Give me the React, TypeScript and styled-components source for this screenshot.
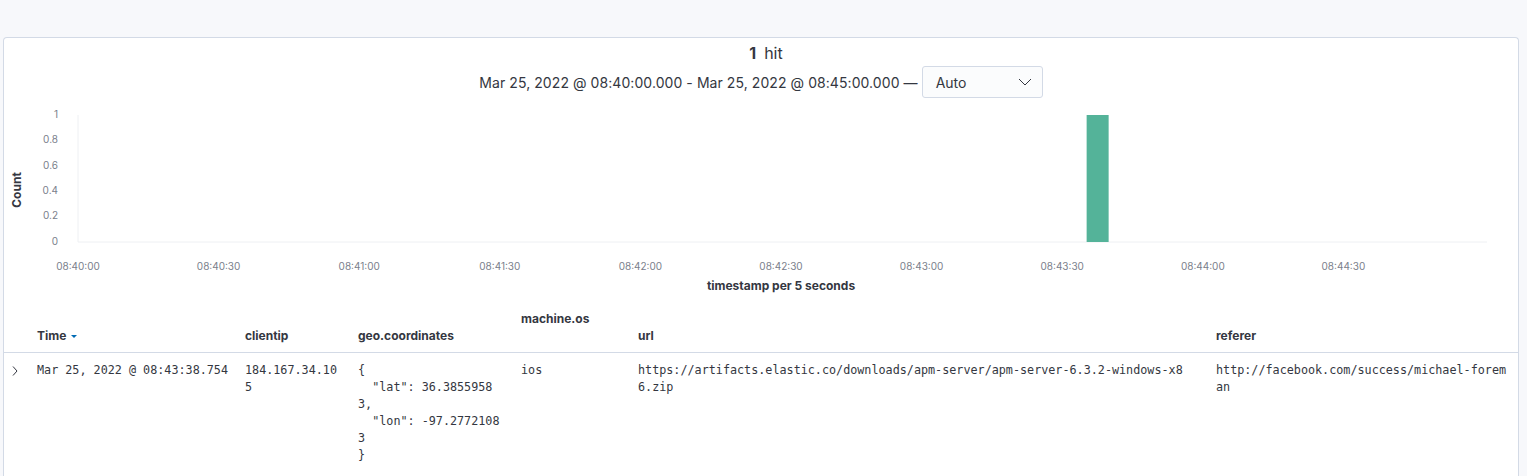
import React from 'react';
import styled, { createGlobalStyle } from 'styled-components';

const GlobalStyle = createGlobalStyle`
  body {
    margin: 0;
    background: #f7f8fb;
    font-family: Inter, "Noto Sans", "Liberation Sans", sans-serif;
    color: #343741;
  }
`;

const Page = styled.div`
  padding: 37px 8px 0 3px;
`;

const Panel = styled.div`
  background: #fff;
  border: 1px solid #d3dae6;
  border-bottom: none;
  border-radius: 4px 4px 0 0;
  min-height: 440px;
`;

const Hits = styled.div`
  text-align: center;
  padding: 3px 0 0 10px;
  font-size: 16px;
  line-height: 24px;

  strong {
    font-weight: 700;
    margin-right: 8px;
  }
`;

const RangeRow = styled.div`
  margin-top: 1px;
  display: flex;
  justify-content: center;
  align-items: center;
  gap: 4px;
  font-size: 14px;
  letter-spacing: 0.07px;
`;

const Select = styled.div`
  width: 121px;
  height: 32px;
  box-sizing: border-box;
  border: 1px solid #d3dae6;
  border-radius: 3px;
  background: #fbfcfd;
  display: flex;
  align-items: center;
  justify-content: space-between;
  padding: 0 9px 0 13px;
  font-size: 14px;
  letter-spacing: 0;
`;

const ChartBox = styled.div`
  margin-top: 6px;
  height: 196px;

  svg {
    display: block;
  }
`;

const columns = '33px 208px 113px 163px 117px 578px 1fr';

const HeaderRow = styled.div`
  display: grid;
  grid-template-columns: ${columns};
  height: 52px;
  border-bottom: 1px solid #d3dae6;
`;

const HeaderCell = styled.div<{ $lift?: boolean }>`
  align-self: end;
  padding-bottom: ${({ $lift }) => ($lift ? 25 : 8)}px;
  font-size: 12px;
  line-height: 17px;
  font-weight: 700;
  color: #343741;
  display: flex;
  align-items: center;
  gap: 4px;
`;

const DataRow = styled.div`
  display: grid;
  grid-template-columns: ${columns};
  padding-top: 9px;
`;

const Toggle = styled.div`
  padding-left: 4px;
  height: 17px;
  display: flex;
  align-items: center;
`;

const DataCell = styled.div<{ $w?: number }>`
  font-family: "DejaVu Sans Mono", "Liberation Mono", monospace;
  font-size: 11.75px;
  line-height: 17px;
  color: #343741;
  white-space: pre-wrap;
  word-break: break-all;
  max-width: ${({ $w }) => ($w ? `${$w}px` : 'none')};
`;

const AxisText = styled.text`
  font-family: Inter, "Noto Sans", sans-serif;
  font-size: 10px;
  fill: #7a808b;
`;

const AxisTitle = styled.text`
  font-family: Inter, "Noto Sans", sans-serif;
  font-size: 12px;
  font-weight: 700;
  fill: #343741;
`;

const plotLeft = 74;
const plotRight = 1480;
const plotTop = 11;
const plotBottom = 138;
const pxPerSecond = (plotRight - plotLeft) / 300;

const xTicks = [
  '08:40:00', '08:40:30', '08:41:00', '08:41:30', '08:42:00',
  '08:42:30', '08:43:00', '08:43:30', '08:44:00', '08:44:30',
];
const yTicks = [0, 0.2, 0.4, 0.6, 0.8, 1];

const Histogram: React.FC = () => (
  <svg width="1514" height="196" viewBox="0 0 1514 196">
    <line x1={plotLeft} y1={plotTop} x2={plotLeft} y2={plotBottom} stroke="#eef0f3" />
    <line x1={plotLeft} y1={plotBottom} x2={plotRight + 3} y2={plotBottom} stroke="#eef0f3" />
    {yTicks.map((v) => (
      <AxisText key={v} x={54} y={plotBottom - v * (plotBottom - plotTop)} textAnchor="end" dominantBaseline="middle">
        {v}
      </AxisText>
    ))}
    {xTicks.map((t, i) => (
      <AxisText key={t} x={plotLeft + i * 30 * pxPerSecond} y={163} textAnchor="middle" dominantBaseline="middle">
        {t}
      </AxisText>
    ))}
    <rect x={plotLeft + 215 * pxPerSecond + 1} y={plotTop} width={22} height={plotBottom - plotTop} fill="#54b399" />
    <AxisTitle x={14} y={86} textAnchor="middle" dominantBaseline="middle" transform="rotate(-90 14 86)">
      Count
    </AxisTitle>
    <AxisTitle x={(plotLeft + plotRight) / 2} y={183} textAnchor="middle" dominantBaseline="middle">
      timestamp per 5 seconds
    </AxisTitle>
  </svg>
);

const geo = `{
  "lat": 36.38559583,
  "lon": -97.27721083
}`;

export default function App() {
  return (
    <>
      <GlobalStyle />
      <Page>
        <Panel>
          <Hits>
            <strong>1</strong>hit
          </Hits>
          <RangeRow>
            <span>Mar 25, 2022 @ 08:40:00.000 - Mar 25, 2022 @ 08:45:00.000 —</span>
            <Select>
              <span>Auto</span>
              <svg width="16" height="16" viewBox="0 0 16 16">
                <path d="M2 5l6 6 6-6" fill="none" stroke="#343741" strokeWidth="1" />
              </svg>
            </Select>
          </RangeRow>
          <ChartBox>
            <Histogram />
          </ChartBox>
          <HeaderRow>
            <div />
            <HeaderCell>
              Time
              <svg width="8" height="8" viewBox="0 0 8 8">
                <path d="M1 3h6L4 6z" fill="#006bb4" />
              </svg>
            </HeaderCell>
            <HeaderCell>clientip</HeaderCell>
            <HeaderCell>geo.coordinates</HeaderCell>
            <HeaderCell $lift>machine.os</HeaderCell>
            <HeaderCell>url</HeaderCell>
            <HeaderCell>referer</HeaderCell>
          </HeaderRow>
          <DataRow>
            <Toggle>
              <svg width="16" height="16" viewBox="0 0 16 16">
                <path d="M5 3.5l4 4.5-4 4.5" fill="none" stroke="#343741" strokeWidth="1" />
              </svg>
            </Toggle>
            <DataCell>Mar 25, 2022 @ 08:43:38.754</DataCell>
            <DataCell $w={95}>184.167.34.105</DataCell>
            <DataCell $w={144}>{geo}</DataCell>
            <DataCell>ios</DataCell>
            <DataCell $w={549}>https://artifacts.elastic.co/downloads/apm-server/apm-server-6.3.2-windows-x86.zip</DataCell>
            <DataCell $w={294}>http://facebook.com/success/michael-foreman</DataCell>
          </DataRow>
        </Panel>
      </Page>
    </>
  );
}
